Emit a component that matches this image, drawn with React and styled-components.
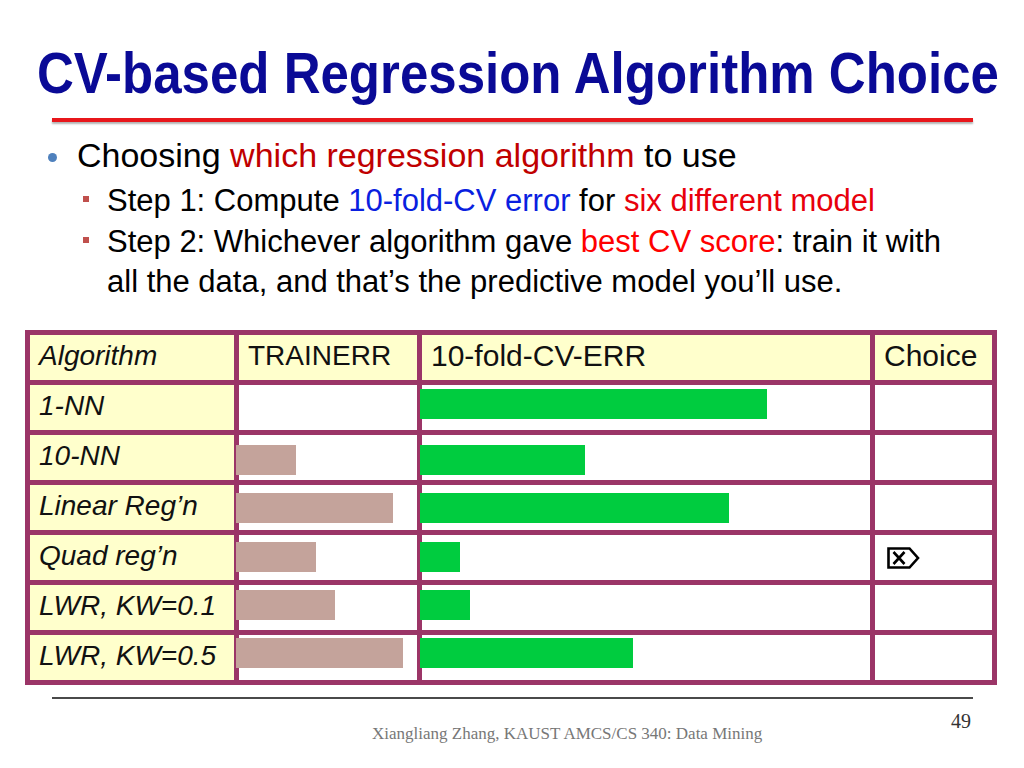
import React from "react";
import styled, { createGlobalStyle } from "styled-components";

const GlobalStyle = createGlobalStyle`
  body {
    margin: 0;
    background: #fff;
  }
`;

const Slide = styled.div`
  width: 1024px;
  height: 768px;
  overflow: hidden;
  background: #fff;
  font-family: "Liberation Sans", Arial, sans-serif;
  display: flex;
  flex-direction: column;
`;

const Title = styled.h1`
  margin: 45px 0 0 37px;
  font-size: 57px;
  line-height: 56px;
  font-weight: bold;
  color: #0a0a96;
  white-space: nowrap;
  transform: scaleX(0.895);
  transform-origin: left center;
`;

const TitleRule = styled.div`
  margin: 17px 0 0 52px;
  width: 921px;
  height: 4px;
  background: #e8161b;
  box-shadow: 0 2px 2px rgba(0, 0, 0, 0.3);
`;

const Bullets = styled.div`
  margin: 13px 0 0 48px;
  width: 922px;
`;

const MainItem = styled.div`
  display: flex;
  align-items: flex-start;
  font-size: 34px;
  line-height: 40px;
  color: #000;
`;

const Dot = styled.span`
  flex: none;
  width: 9px;
  height: 9px;
  border-radius: 50%;
  background: #4f81bd;
  margin: 18px 20px 0 0;
`;

const SubList = styled.div`
  margin: 6px 0 0 35px;
  display: flex;
  flex-direction: column;
  gap: 1px;
`;

const SubItem = styled.div`
  display: flex;
  align-items: flex-start;
  font-size: 31px;
  line-height: 40px;
  color: #000;
`;

const Square = styled.span`
  flex: none;
  width: 6px;
  height: 6px;
  background: #c0504d;
  margin: 15px 18px 0 0;
`;

const Hl = styled.span`
  color: ${(p) => p.$c};
`;

const Table = styled.div`
  margin: 28px 0 0 25px;
  display: grid;
  grid-template-columns: 204px 178px 448px 117px;
  grid-auto-rows: 45px;
  gap: 5px;
  padding: 5px;
  width: max-content;
  background: #9b3567;
`;

const Cell = styled.div`
  background: ${(p) => (p.$label ? "#ffffcc" : "#fff")};
  padding-left: 9px;
  font-size: ${(p) => p.$size || 28}px;
  font-style: ${(p) => (p.$italic ? "italic" : "normal")};
  line-height: 42px;
  color: #111;
  white-space: nowrap;
`;

const BarCell = styled.div`
  background: #fff;
`;

const Bar = styled.div`
  height: 30px;
  margin-top: ${(p) => p.$top}px;
  margin-left: ${(p) => p.$shift}px;
  width: ${(p) => p.$w}px;
  background: ${(p) => p.$color};
`;

const ChoiceCell = styled.div`
  background: #fff;
  padding: 12px 0 0 12px;
`;

const FooterRule = styled.div`
  margin: 12px 0 0 52px;
  width: 921px;
  height: 2px;
  background: #4a4a4a;
`;

const FooterRow = styled.div`
  display: flex;
  align-items: flex-start;
  font-family: "Liberation Serif", "Times New Roman", serif;
`;

const FooterText = styled.div`
  margin: 25px 0 0 372px;
  font-size: 17px;
  line-height: 20px;
  color: #777;
  white-space: nowrap;
`;

const PageNum = styled.div`
  margin: 10px 53px 0 auto;
  font-size: 20px;
  line-height: 24px;
  color: #333;
`;

const TAN = "#c4a39b";
const GREEN = "#00cc3f";

const rows = [
  { name: "1-NN", train: 0, cv: 347, top: 4 },
  { name: "10-NN", train: 60, cv: 165, top: 10 },
  { name: "Linear Reg’n", train: 157, cv: 309, top: 8 },
  { name: "Quad reg’n", train: 80, cv: 40, top: 7, choice: true },
  { name: "LWR, KW=0.1", train: 99, cv: 50, top: 5 },
  { name: "LWR, KW=0.5", train: 167, cv: 213, top: 3 },
];

const EraseIcon = () => (
  <svg width="33" height="22" viewBox="0 0 33 22">
    <path
      d="M1.5 1.5 H22.5 L31 11 L22.5 20.5 H1.5 Z"
      fill="none"
      stroke="#000"
      strokeWidth="2.6"
    />
    <path d="M6.5 5 L17.5 17 M17.5 5 L6.5 17" stroke="#000" strokeWidth="2.6" />
  </svg>
);

export default function App() {
  return (
    <Slide>
      <GlobalStyle />
      <Title>CV-based Regression Algorithm Choice</Title>
      <TitleRule />

      <Bullets>
        <MainItem>
          <Dot />
          <span>
            Choosing <Hl $c="#c00000">which regression algorithm</Hl> to use
          </span>
        </MainItem>
        <SubList>
          <SubItem>
            <Square />
            <span>
              Step 1: Compute <Hl $c="#0a1fe0">10-fold-CV error</Hl> for{" "}
              <Hl $c="#e8000b">six different model</Hl>
            </span>
          </SubItem>
          <SubItem>
            <Square />
            <span>
              Step 2: Whichever algorithm gave{" "}
              <Hl $c="#ff0000">best CV score</Hl>: train it with all the data,
              and that’s the predictive model you’ll use.
            </span>
          </SubItem>
        </SubList>
      </Bullets>

      <Table>
        <Cell $label $italic>Algorithm</Cell>
        <Cell $label>TRAINERR</Cell>
        <Cell $label $size={30}>10-fold-CV-ERR</Cell>
        <Cell $label $size={30}>Choice</Cell>
        {rows.map((r) => (
          <React.Fragment key={r.name}>
            <Cell $label $italic>{r.name}</Cell>
            <BarCell>
              {r.train > 0 && (
                <Bar $w={r.train} $top={r.top} $shift={-3} $color={TAN} />
              )}
            </BarCell>
            <BarCell>
              <Bar $w={r.cv} $top={r.top} $shift={-2} $color={GREEN} />
            </BarCell>
            <ChoiceCell>{r.choice && <EraseIcon />}</ChoiceCell>
          </React.Fragment>
        ))}
      </Table>

      <FooterRule />
      <FooterRow>
        <FooterText>Xiangliang Zhang, KAUST AMCS/CS 340: Data Mining</FooterText>
        <PageNum>49</PageNum>
      </FooterRow>
    </Slide>
  );
}
